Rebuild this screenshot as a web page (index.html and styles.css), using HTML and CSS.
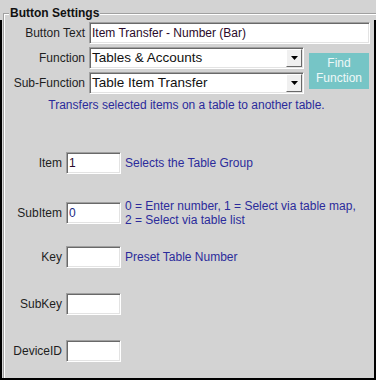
FILE: index.html
```html
<!DOCTYPE html>
<html>
<head>
<meta charset="utf-8">
<link rel="stylesheet" href="styles.css">
</head>
<body>
<div class="frame">
  <fieldset class="group">
    <legend class="group-title">Button Settings</legend>
    <div class="top-grid">
      <label class="lbl">Button Text</label>
      <input class="field field-wide" type="text" value="Item Transfer - Number (Bar)">

      <label class="lbl">Function</label>
      <div class="select">
        <span class="select-text">Tables &amp; Accounts</span>
        <span class="select-btn"><svg width="7" height="4" viewBox="0 0 7 4"><path d="M0 0h7L3.5 4z" fill="#000"/></svg></span>
      </div>
      <div class="find-btn">Find<br>Function</div>

      <label class="lbl">Sub-Function</label>
      <div class="select">
        <span class="select-text">Table Item Transfer</span>
        <span class="select-btn"><svg width="7" height="4" viewBox="0 0 7 4"><path d="M0 0h7L3.5 4z" fill="#000"/></svg></span>
      </div>

      <p class="func-desc">Transfers selected items on a table to another table.</p>
    </div>

    <div class="params">
      <div class="param">
        <label class="plbl">Item</label>
        <input class="field field-small" type="text" value="1">
        <span class="pdesc">Selects the Table Group</span>
      </div>
      <div class="param">
        <label class="plbl">SubItem</label>
        <input class="field field-small field-blue" type="text" value="0">
        <span class="pdesc">0 = Enter number, 1 = Select via table map,<br>2 = Select via table list</span>
      </div>
      <div class="param">
        <label class="plbl">Key</label>
        <input class="field field-small" type="text" value="">
        <span class="pdesc">Preset Table Number</span>
      </div>
      <div class="param">
        <label class="plbl">SubKey</label>
        <input class="field field-small" type="text" value="">
        <span class="pdesc"></span>
      </div>
      <div class="param">
        <label class="plbl">DeviceID</label>
        <input class="field field-small" type="text" value="">
        <span class="pdesc"></span>
      </div>
    </div>
  </fieldset>
</div>
</body>
</html>
```

FILE: styles.css
```css
html, body {
  margin: 0;
  padding: 0;
  background: #d3d3d3;
}
body {
  font-family: "Liberation Sans", Arial, sans-serif;
  font-size: 12px;
  color: #1e1e1e;
}
.frame {
  position: relative;
  width: 376px;
  height: 380px;
  box-sizing: border-box;
  overflow: hidden;
  background: #d3d3d3;
}
.frame::after {
  content: "";
  position: absolute;
  left: 0;
  right: 0;
  top: 20px;
  bottom: 0;
  border-left: 2px solid #000;
  border-right: 2px solid #000;
  border-bottom: 2px solid #000;
  pointer-events: none;
}
.group {
  margin: 5px 0 0 3px;
  padding: 1px 0 0 0;
  min-width: 0;
  border: none;
  border-top: 1px solid #a0a0a0;
  border-left: 1px solid #a0a0a0;
  box-shadow: inset 1px 1px 0 #fff;
  height: 420px;
  box-sizing: border-box;
}
.group-title {
  margin-left: 5px;
  padding: 0 1px;
  font-weight: bold;
  font-size: 12px;
  line-height: 16px;
  color: #111;
  background: #d3d3d3;
}
.top-grid {
  display: grid;
  grid-template-columns: 81px 215px 61px;
  column-gap: 4px;
  grid-template-rows: 22px 22px 22px auto;
  row-gap: 3px;
}
.top-grid .field-wide {
  grid-column: 2 / 4;
}
.lbl {
  text-align: right;
  align-self: center;
  white-space: nowrap;
  font-size: 12px;
  line-height: 14px;
  color: #1e1e1e;
}
.field {
  box-sizing: border-box;
  height: 22px;
  margin: 0;
  padding: 0 0 0 2px;
  border: 1px solid;
  border-color: #a0a0a0 #fff #fff #a0a0a0;
  box-shadow: inset 1px 1px 0 #696969, inset -1px -1px 0 #e3e3e3;
  background: #fff;
  font-family: "Liberation Sans", Arial, sans-serif;
  font-size: 12px;
  color: #2a0a2a;
  outline: none;
}
.field-wide {
  width: 281px;
}
.field-small {
  width: 55px;
}
.field-blue {
  color: #1a2a80;
}
.select {
  box-sizing: border-box;
  height: 22px;
  display: flex;
  align-items: center;
  border: 1px solid;
  border-color: #a0a0a0 #fff #fff #a0a0a0;
  box-shadow: inset 1px 1px 0 #696969, inset -1px -1px 0 #e3e3e3;
  background: #fff;
}
.select-text {
  flex: 1;
  padding-left: 2px;
  font-size: 13.5px;
  line-height: 18px;
  color: #111;
  white-space: nowrap;
}
.select-btn {
  box-sizing: border-box;
  width: 16px;
  height: 18px;
  margin-right: 1px;
  display: flex;
  align-items: center;
  justify-content: center;
  background: #f0f0f0;
  border: 1px solid;
  border-color: #fff #696969 #696969 #fff;
}
.find-btn {
  grid-column: 3;
  grid-row: 2 / 4;
  align-self: center;
  height: 36px;
  margin-left: 1px;
  background: #76c5c6;
  color: #eef8f8;
  font-size: 12px;
  line-height: 15px;
  text-align: center;
  padding-top: 3px;
  box-sizing: border-box;
}
.func-desc {
  grid-column: 1 / 4;
  margin: 1px 0 0 0;
  text-align: center;
  font-size: 12px;
  line-height: 14px;
  color: #2b2b9b;
}
.params {
  display: flex;
  flex-direction: column;
  gap: 25px;
  margin-top: 40px;
}
.param {
  display: grid;
  grid-template-columns: 58px 55px auto;
  column-gap: 4px;
  align-items: center;
  height: 22px;
}
.plbl {
  text-align: right;
  white-space: nowrap;
  font-size: 12px;
  line-height: 14px;
  margin-top: -1px;
  color: #1e1e1e;
}
.pdesc {
  font-size: 12px;
  line-height: 14px;
  color: #2b2b9b;
  white-space: nowrap;
}
```
